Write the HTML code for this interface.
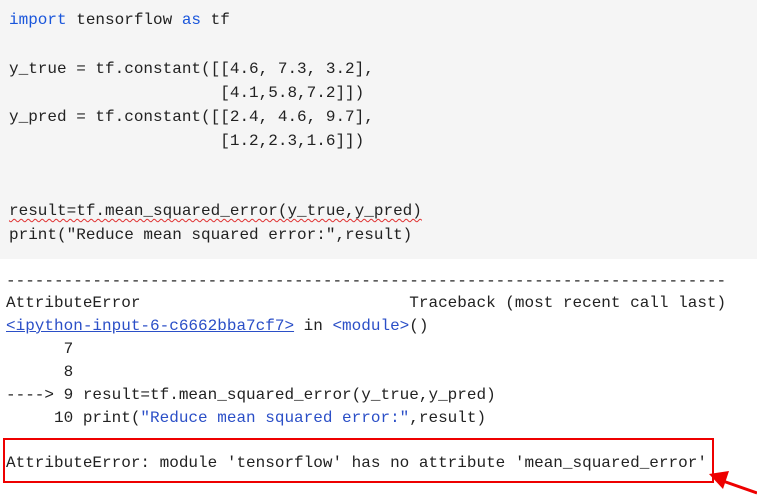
<!DOCTYPE html>
<html><head><style>
body{margin:0;width:757px;height:498px;background:#fff;overflow:hidden;position:relative;font-family:"Liberation Mono",monospace;font-size:16px;}
.code{position:absolute;left:0;top:0;width:757px;height:259px;background:#f5f5f5;}
.l{position:absolute;left:9px;white-space:pre;line-height:24px;color:#222;}
.k{color:#1a56db;}
.o{position:absolute;left:6px;white-space:pre;line-height:23px;color:#222;}
.b{color:#2b4fc7;}
.u{text-decoration:underline wavy #e03030;text-decoration-thickness:1px;text-underline-offset:3px;}
</style></head><body>
<div class="code">
<div class="l" style="top:8px"><span class="k">import</span> tensorflow <span class="k">as</span> tf</div>
<div class="l" style="top:57px">y_true = tf.constant([[4.6, 7.3, 3.2],</div>
<div class="l" style="top:81px">                      [4.1,5.8,7.2]])</div>
<div class="l" style="top:105px">y_pred = tf.constant([[2.4, 4.6, 9.7],</div>
<div class="l" style="top:129px">                      [1.2,2.3,1.6]])</div>
<div class="l" style="top:199px"><span class="u">result=tf.mean_squared_error(y_true,y_pred)</span></div>
<div class="l" style="top:223px">print("Reduce mean squared error:",result)</div>
</div>
<div class="o" style="top:270px">---------------------------------------------------------------------------</div>
<div class="o" style="top:292px">AttributeError                            Traceback (most recent call last)</div>
<div class="o" style="top:315px"><span class="b" style="text-decoration:underline">&lt;ipython-input-6-c6662bba7cf7&gt;</span> in <span class="b">&lt;module&gt;</span>()</div>
<div class="o" style="top:338px">      7</div>
<div class="o" style="top:361px">      8</div>
<div class="o" style="top:384px">----&gt; 9 result=tf.mean_squared_error(y_true,y_pred)</div>
<div class="o" style="top:407px">     10 print(<span class="b">"Reduce mean squared error:"</span>,result)</div>
<div class="o" style="top:452px">AttributeError: module 'tensorflow' has no attribute 'mean_squared_error'</div>
<div style="position:absolute;left:3px;top:438px;width:707px;height:41px;border:2px solid #e00;"></div>
<svg style="position:absolute;left:0;top:0" width="757" height="498"><line x1="757" y1="493" x2="720" y2="480" stroke="#e00" stroke-width="3"/><polygon points="709,474 729,471 723,489" fill="#e00"/></svg>
</body></html>
